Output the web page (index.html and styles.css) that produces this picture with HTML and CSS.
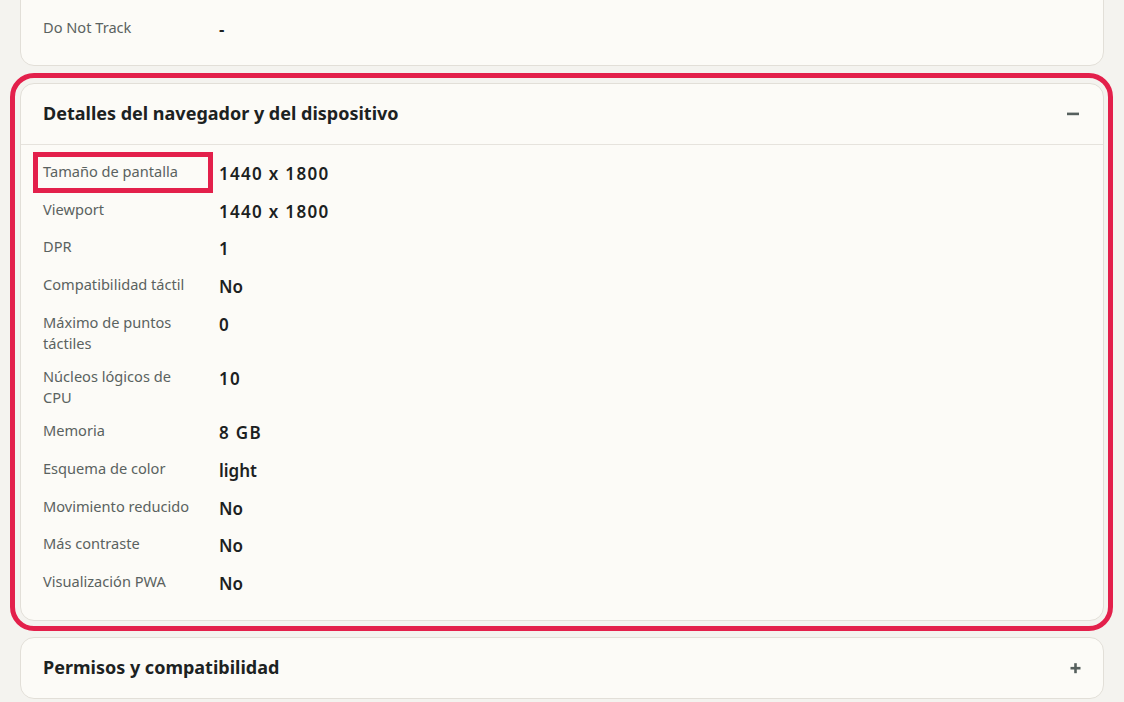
FILE: index.html
```html
<!DOCTYPE html>
<html lang="es">
<head>
<meta charset="utf-8">
<title>Detalles</title>
<link rel="stylesheet" href="styles.css">
</head>
<body>
<div class="stack">
  <section class="card card-top">
    <div class="card-body body-top">
      <div class="row"><div class="label">Do Not Track</div><div class="value">-</div></div>
    </div>
  </section>

  <section class="card highlighted">
    <div class="hl-ring"></div>
    <header class="card-head">
      <h2 class="card-title">Detalles del navegador y del dispositivo</h2>
      <svg class="toggle" width="14" height="14" viewBox="0 0 14 14"><rect x="0" y="5.6" width="12" height="2.6" fill="#56605e"/></svg>
    </header>
    <div class="card-body">
      <div class="row"><div class="label"><span class="hl-box"></span>Tamaño de pantalla</div><div class="value num">1440 x 1800</div></div>
      <div class="row"><div class="label">Viewport</div><div class="value num">1440 x 1800</div></div>
      <div class="row"><div class="label">DPR</div><div class="value num">1</div></div>
      <div class="row"><div class="label">Compatibilidad táctil</div><div class="value">No</div></div>
      <div class="row"><div class="label">Máximo de puntos táctiles</div><div class="value num">0</div></div>
      <div class="row"><div class="label">Núcleos lógicos de CPU</div><div class="value num">10</div></div>
      <div class="row"><div class="label">Memoria</div><div class="value num">8 GB</div></div>
      <div class="row"><div class="label">Esquema de color</div><div class="value">light</div></div>
      <div class="row"><div class="label">Movimiento reducido</div><div class="value">No</div></div>
      <div class="row"><div class="label">Más contraste</div><div class="value">No</div></div>
      <div class="row"><div class="label">Visualización PWA</div><div class="value">No</div></div>
    </div>
  </section>

  <section class="card">
    <header class="card-head head-closed">
      <h2 class="card-title">Permisos y compatibilidad</h2>
      <svg class="toggle" width="14" height="14" viewBox="0 0 14 14"><rect x="3.5" y="5.9" width="10" height="2.6" fill="#56605e"/><rect x="7.2" y="2.2" width="2.6" height="10" fill="#56605e"/></svg>
    </header>
  </section>
</div>
</body>
</html>
```

FILE: styles.css
```css
html, body {
  margin: 0;
  padding: 0;
  background: #f4f3ef;
  font-family: "Noto Sans", "Liberation Sans", sans-serif;
  color: #1d2323;
  overflow: hidden;
}

.stack {
  display: flex;
  flex-direction: column;
  gap: 16px;
  padding: 0 20px;
}

.card {
  position: relative;
  background: #fcfbf7;
  border: 1px solid #e2dfd8;
  border-radius: 14px;
}

.card-top {
  margin-top: -30px;
  margin-bottom: 1px;
}

.card-head {
  display: flex;
  align-items: center;
  justify-content: space-between;
  height: 60px;
  padding: 0 22px;
  border-bottom: 1px solid #e6e3dd;
}

.head-closed {
  border-bottom: none;
}

.card-title {
  margin: 0;
  font-size: 18px;
  line-height: 24px;
  font-weight: 700;
  color: #1c2222;
  transform: translateY(-1px);
}

.toggle {
  display: block;
  flex: none;
}

.card-body {
  display: flex;
  flex-direction: column;
  gap: 12px;
  padding: 16px 22px 23px;
}

.body-top {
  padding-top: 46px;
  padding-bottom: 22px;
}

.row {
  display: flex;
  align-items: flex-start;
  gap: 24px;
}

.label {
  position: relative;
  width: 152px;
  flex: none;
  font-size: 14.6px;
  line-height: 21px;
  color: #5a6260;
}

.value {
  font-size: 17px;
  line-height: 25.8px;
  font-weight: 600;
  color: #1b2121;
}

.num {
  letter-spacing: 1.3px;
}

.hl-ring {
  position: absolute;
  left: -11px;
  right: -10px;
  top: -11px;
  bottom: -11px;
  border: 5px solid #e3204b;
  border-radius: 24px;
  pointer-events: none;
}

.hl-box {
  position: absolute;
  left: -10px;
  top: -9px;
  width: 180px;
  height: 41px;
  box-sizing: border-box;
  border: 5px solid #e3204b;
  pointer-events: none;
}
```
